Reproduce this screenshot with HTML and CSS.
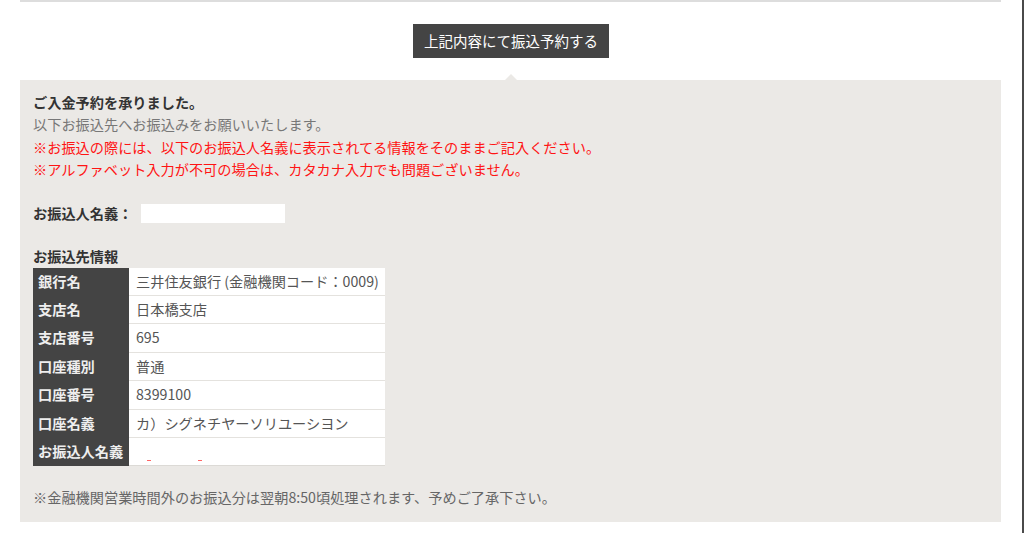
FILE: index.html
```html
<!DOCTYPE html>
<html lang="ja">
<head>
<meta charset="utf-8">
<title>振込予約</title>
<link rel="stylesheet" href="styles.css">
</head>
<body>
<div class="page">
  <div class="content">
    <div class="prev-box"></div>
    <div class="action">
      <button class="btn" type="button">上記内容にて振込予約する</button>
    </div>
    <div class="panel">
      <p class="title">ご入金予約を承りました。</p>
      <p class="sub">以下お振込先へお振込みをお願いいたします。</p>
      <p class="warn">※お振込の際には、以下のお振込人名義に表示されてる情報をそのままご記入ください。</p>
      <p class="warn">※アルファベット入力が不可の場合は、カタカナ入力でも問題ございません。</p>
      <div class="name-row">
        <span class="label">お振込人名義：</span>
        <span class="name-box"></span>
      </div>
      <p class="label heading">お振込先情報</p>
      <table class="bank">
        <tr><th>銀行名</th><td>三井住友銀行 (金融機関コード：0009)</td></tr>
        <tr><th>支店名</th><td>日本橋支店</td></tr>
        <tr><th>支店番号</th><td>695</td></tr>
        <tr><th>口座種別</th><td>普通</td></tr>
        <tr><th>口座番号</th><td>8399100</td></tr>
        <tr><th>口座名義</th><td>カ）シグネチヤーソリユーシヨン</td></tr>
        <tr><th>お振込人名義</th><td class="marks"><span class="mark"></span><span class="mark"></span></td></tr>
      </table>
      <p class="note">※金融機関営業時間外のお振込分は翌朝8:50頃処理されます、予めご了承下さい。</p>
    </div>
  </div>
</div>
</body>
</html>
```

FILE: styles.css
```css
html, body {
  margin: 0;
  padding: 0;
  background: #ffffff;
}
body {
  font-family: "Noto Sans CJK JP", "Noto Sans", sans-serif;
  color: #333;
}
.page {
  width: 1022px;
  height: 533px;
  border-right: 2px solid #4a4a4a;
  overflow: hidden;
  background: #ffffff;
}
.content {
  width: 981px;
  margin-left: 20px;
}
.prev-box {
  height: 0;
  border-bottom: 2px solid #dddddd;
  border-left: 1px solid #dddddd;
  border-right: 1px solid #dddddd;
}
.action {
  display: flex;
  justify-content: center;
  margin-top: 22px;
}
.btn {
  margin-left: 1px;
  height: 34px;
  padding: 0 11px;
  border: 0;
  background: #444444;
  color: #ffffff;
  font-family: "Noto Sans CJK JP", sans-serif;
  font-size: 14.5px;
  line-height: 34px;
}
.panel {
  position: relative;
  margin-top: 22px;
  background: #ebe9e6;
  padding: 11px 13px 13px 13px;
  font-size: 14.2px;
  line-height: 22.33px;
}
.panel::before {
  content: "";
  position: absolute;
  top: -6px;
  left: 485px;
  border-left: 6px solid transparent;
  border-right: 6px solid transparent;
  border-bottom: 6px solid #ebe9e6;
}
.panel p {
  margin: 0;
}
.title {
  font-weight: bold;
  color: #333;
}
.sub {
  color: #777;
}
.warn {
  color: #ff1414;
}
.name-row {
  display: flex;
  align-items: center;
  margin-top: 22px;
  height: 22px;
}
.label {
  font-weight: bold;
  color: #333;
}
.name-box {
  display: block;
  width: 144px;
  height: 19px;
  margin-left: 9px;
  background: #ffffff;
}
.heading {
  margin-top: 21px !important;
}
.bank {
  border-collapse: collapse;
  width: 352px;
  font-size: 14.2px;
}
.bank th {
  width: 86px;
  background: #444444;
  color: #eeeeee;
  font-weight: bold;
  text-align: left;
  padding: 3px 5px;
  line-height: 21.4px;
  white-space: nowrap;
  border-bottom: 1px solid #444444;
}
.bank td {
  background: #ffffff;
  color: #555555;
  padding: 3px 4px 3px 7px;
  line-height: 21.4px;
  border-bottom: 1px solid #e4e2de;
  white-space: nowrap;
}
.bank tr:last-child td {
  border-bottom: 1px solid #dcdad6;
}
.marks {
  vertical-align: bottom;
}
.mark {
  display: inline-block;
  width: 4px;
  height: 1px;
  background: #ff6666;
  margin-left: 11px;
  margin-right: 36px;
  vertical-align: -4px;
}
.note {
  margin-top: 20px !important;
  color: #666666;
}
```
